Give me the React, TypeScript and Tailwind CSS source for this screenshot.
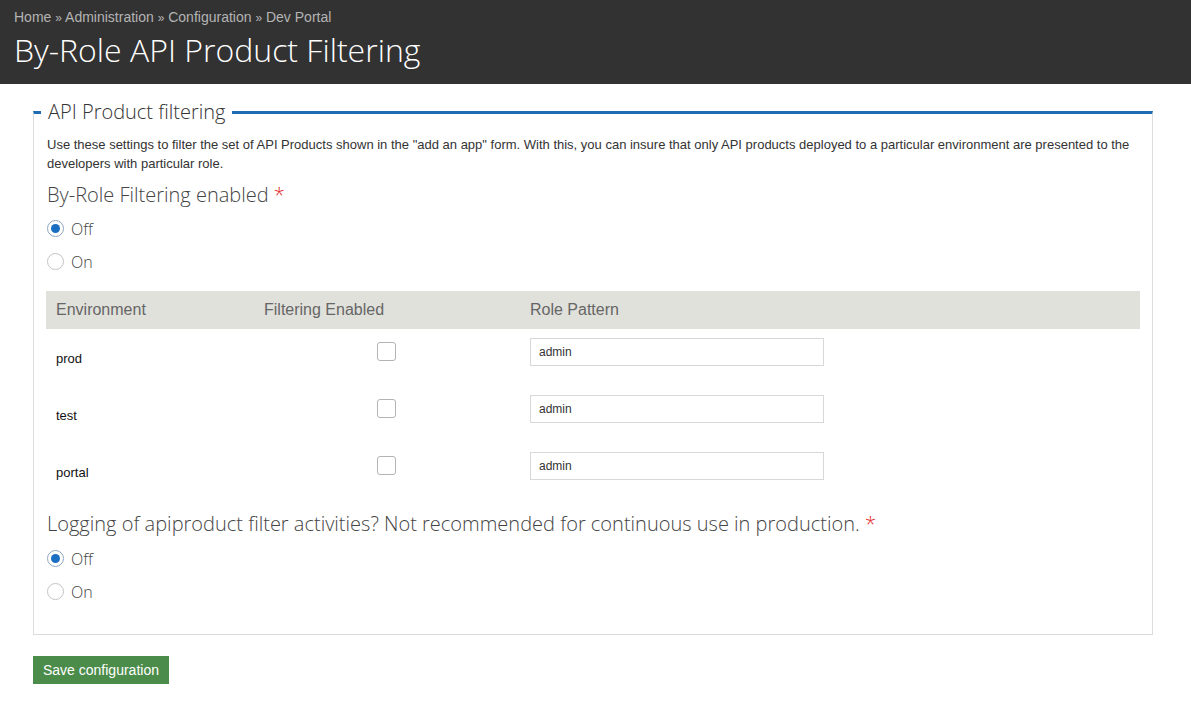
import { useState } from "react";

const envs = ["prod", "test", "portal"];

const Radio = ({
  checked,
  label,
  onClick,
}: {
  checked: boolean;
  label: string;
  onClick: () => void;
}) => (
  <label
    onClick={onClick}
    className="flex items-center h-[33px] cursor-pointer"
  >
    <span
      className={`w-[17px] h-[17px] rounded-full border flex items-center justify-center bg-white ${
        checked ? "border-[#8fa6bd]" : "border-[#c4c4c4]"
      }`}
    >
      {checked && <span className="w-[9px] h-[9px] rounded-full bg-[#1b6fc2]"></span>}
    </span>
    <span className="ml-[7px] text-[16px] font-light text-[#444] font-['Open_Sans',sans-serif]">
      {label}
    </span>
  </label>
);

export default function App() {
  const [filtering, setFiltering] = useState("off");
  const [logging, setLogging] = useState("off");
  const [enabled, setEnabled] = useState<Record<string, boolean>>({});

  return (
    <div className="min-h-[720px] bg-white font-['Liberation_Sans',Arial,sans-serif]">
      {/* Header */}
      <div className="h-[84px] bg-[#323232] pl-[14px] pt-[8px]">
        <div className="text-[14px] text-[#b4b4b4] leading-[18px]">
          Home <span className="text-[12px]">»</span> Administration{" "}
          <span className="text-[12px]">»</span> Configuration{" "}
          <span className="text-[12px]">»</span> Dev Portal
        </div>
        <h1 className="mt-[1px] text-[32px] leading-[44px] font-light text-white font-['Open_Sans',sans-serif]">
          By-Role API Product Filtering
        </h1>
      </div>

      <div className="pl-[33px] pr-[38px]">
        <fieldset className="mt-[15px] border border-[#dcdcdc] border-t-[3px] border-t-[#1e6db2] px-[13px] pt-[10px] pb-[26px]">
          <legend className="ml-[-6px] px-[7px] text-[20px] leading-[26px] font-light text-[#333] font-['Open_Sans',sans-serif]">
            API Product filtering
          </legend>

          <p className="text-[13px] leading-[19px] text-[#333]">
            Use these settings to filter the set of API Products shown in the "add an app" form. With
            this, you can insure that only API products deployed to a particular environment are
            presented to the developers with particular role.
          </p>

          <div className="mt-[7px] text-[20px] leading-[30px] font-light text-[#444] font-['Open_Sans',sans-serif]">
            By-Role Filtering enabled <span className="text-[#e32727]">*</span>
          </div>
          <div className="mt-[2px]">
            <Radio checked={filtering === "off"} label="Off" onClick={() => setFiltering("off")} />
            <Radio checked={filtering === "on"} label="On" onClick={() => setFiltering("on")} />
          </div>

          {/* Environment table */}
          <div className="mt-[13px] mr-[-1px] ml-[-1px]">
            <div className="grid grid-cols-[208px_266px_1fr] h-[38px] items-center bg-[#e1e1dc] text-[16px] text-[#666]">
              <div className="pl-[10px]">Environment</div>
              <div className="pl-[10px]">Filtering Enabled</div>
              <div className="pl-[10px]">Role Pattern</div>
            </div>
            {envs.map((env) => (
              <div key={env} className="grid grid-cols-[208px_266px_1fr] h-[57px]">
                <div className="pl-[10px] pt-[20px] text-[13px] text-[#111]">{env}</div>
                <div className="flex justify-center pt-[13px] pr-[2px]">
                  <span
                    onClick={() => setEnabled({ ...enabled, [env]: !enabled[env] })}
                    className="w-[19px] h-[19px] rounded-[3px] border border-[#b4b4b4] bg-white cursor-pointer flex items-center justify-center text-[13px] text-[#1b6fc2]"
                  >
                    {enabled[env] ? "✓" : ""}
                  </span>
                </div>
                <div className="pl-[10px] pt-[9px]">
                  <input
                    defaultValue="admin"
                    className="w-[294px] h-[28px] border border-[#d8d8d8] px-[8px] text-[12px] text-[#333] outline-none"
                  />
                </div>
              </div>
            ))}
          </div>

          <div className="mt-[9px] text-[20px] leading-[30px] font-light text-[#444] font-['Open_Sans',sans-serif]">
            Logging of apiproduct filter activities? Not recommended for continuous use in production.{" "}
            <span className="text-[#e32727]">*</span>
          </div>
          <div className="mt-[3px]">
            <Radio checked={logging === "off"} label="Off" onClick={() => setLogging("off")} />
            <Radio checked={logging === "on"} label="On" onClick={() => setLogging("on")} />
          </div>
        </fieldset>

        <button className="mt-[21px] h-[28px] px-[10px] bg-[#4b8c4a] text-white text-[14px]">
          Save configuration
        </button>
      </div>
    </div>
  );
}
